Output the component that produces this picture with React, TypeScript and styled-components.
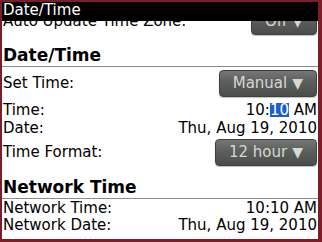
import React from "react";
import styled, { createGlobalStyle } from "styled-components";

const Global = createGlobalStyle`
  html, body { margin: 0; padding: 0; background: #fff; }
  body { font-family: "DejaVu Sans", "Liberation Sans", sans-serif; }
  * { box-sizing: border-box; }
`;

const Frame = styled.div`
  position: relative;
  width: 322px;
  height: 242px;
  overflow: hidden;
  background: #fff;
  border-style: solid;
  border-color: #7b1d2b;
  border-width: 2px 4px 3px 2px;
  font-family: "DejaVu Sans", "Liberation Sans", sans-serif;
  font-size: 15px;
  color: #000;
`;

const Header = styled.div`
  position: absolute;
  top: 0;
  left: -2px;
  right: 0;
  height: 19px;
  z-index: 2;
  background: #000;
  color: #fff;
  font-size: 15px;
  line-height: 17px;
  padding-left: 3px;
`;

const Content = styled.div`
  display: flex;
  flex-direction: column;
  padding: 0 1px 0 1px;
`;

const SettingRow = styled.div<{ $pt: number }>`
  display: flex;
  align-items: center;
  justify-content: space-between;
  padding-top: ${(p) => p.$pt}px;
`;

const Label = styled.span`
  line-height: 17px;
  white-space: nowrap;
`;

const Dropdown = styled.div`
  height: 27px;
  display: flex;
  align-items: center;
  gap: 5px;
  padding: 0 13px;
  border: 1px solid #3f413f;
  border-radius: 4px;
  background: linear-gradient(#747774 0%, #5c5e5c 45%, #4b4d4b 100%);
  box-shadow: 0 1px 1px rgba(0, 0, 0, 0.25);
  color: #d6d8d6;
  font-size: 15px;
  line-height: 17px;
  white-space: nowrap;
`;

const Arrow = styled.span`
  font-size: 14px;
`;

const SectionTitle = styled.div<{ $mt: number }>`
  margin: ${(p) => p.$mt}px -1px 0 -1px;
  padding: 0 1px 1px 1px;
  font-weight: bold;
  font-size: 17px;
  line-height: 20px;
  border-bottom: 1px solid #8a8a8a;
`;

const InfoGroup = styled.div<{ $pt: number; $lh: number }>`
  display: flex;
  flex-direction: column;
  padding-top: ${(p) => p.$pt}px;
  line-height: ${(p) => p.$lh}px;
`;

const InfoRow = styled.div`
  display: flex;
  justify-content: space-between;
  white-space: nowrap;
`;

const Highlight = styled.span`
  display: inline-block;
  height: 14px;
  line-height: 14px;
  background: #1c5fce;
  color: #fff;
`;

export default function App() {
  return (
    <>
      <Global />
      <Frame>
        <Header>Date/Time</Header>
        <Content>
          <SettingRow $pt={6}>
            <Label>Auto Update Time Zone:</Label>
            <Dropdown>
              Off <Arrow>▼</Arrow>
            </Dropdown>
          </SettingRow>
          <SectionTitle $mt={10}>Date/Time</SectionTitle>
          <SettingRow $pt={3}>
            <Label>Set Time:</Label>
            <Dropdown>
              Manual <Arrow>▼</Arrow>
            </Dropdown>
          </SettingRow>
          <InfoGroup $pt={4} $lh={18}>
            <InfoRow>
              <span>Time:</span>
              <span>
                10:<Highlight>10</Highlight> AM
              </span>
            </InfoRow>
            <InfoRow>
              <span>Date:</span>
              <span>Thu, Aug 19, 2010</span>
            </InfoRow>
          </InfoGroup>
          <SettingRow $pt={2}>
            <Label>Time Format:</Label>
            <Dropdown>
              12 hour <Arrow>▼</Arrow>
            </Dropdown>
          </SettingRow>
          <SectionTitle $mt={11}>Network Time</SectionTitle>
          <InfoGroup $pt={1} $lh={17}>
            <InfoRow>
              <span>Network Time:</span>
              <span>10:10 AM</span>
            </InfoRow>
            <InfoRow>
              <span>Network Date:</span>
              <span>Thu, Aug 19, 2010</span>
            </InfoRow>
          </InfoGroup>
        </Content>
      </Frame>
    </>
  );
}
